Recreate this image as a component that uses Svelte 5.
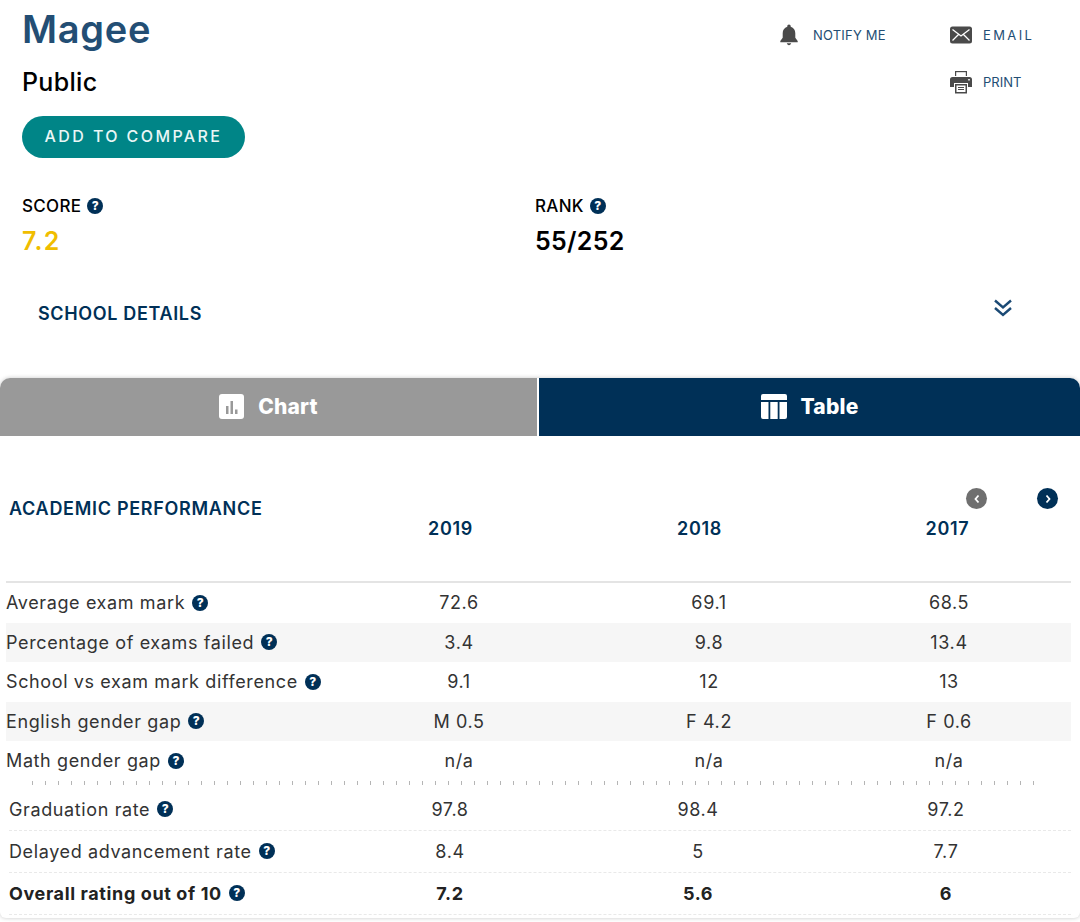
<script>
  const mainRows = [
    { label: 'Average exam mark', vals: ['72.6', '69.1', '68.5'] },
    { label: 'Percentage of exams failed', vals: ['3.4', '9.8', '13.4'] },
    { label: 'School vs exam mark difference', vals: ['9.1', '12', '13'] },
    { label: 'English gender gap', vals: ['M 0.5', 'F 4.2', 'F 0.6'] },
    { label: 'Math gender gap', vals: ['n/a', 'n/a', 'n/a'] }
  ];
  const lowerRows = [
    { label: 'Graduation rate', vals: ['97.8', '98.4', '97.2'] },
    { label: 'Delayed advancement rate', vals: ['8.4', '5', '7.7'] },
    { label: 'Overall rating out of 10', vals: ['7.2', '5.6', '6'], bold: true }
  ];
</script>

{#snippet help()}
  <span class="help">?</span>
{/snippet}

<div class="page">
  <header class="top">
    <div class="top-left">
      <h1>Magee</h1>
      <div class="kind">Public</div>
      <button class="compare">ADD TO COMPARE</button>
    </div>
    <div class="actions">
      <div class="action notify">
        <svg width="22" height="22" viewBox="0 0 22 22"><path fill="#4a4a4a" d="M11 0.5c-1 0-1.7.8-1.7 1.7v.6C6.200 3.600 4.700 6.200 4.700 9.200v4.600L2.300 17v1.200h17.400V17l-2.400-3.200V9.200c0-3-1.500-5.600-4.600-6.400v-.6c0-.9-.7-1.700-1.700-1.700zM8.800 19.300c.2 1.100 1.100 1.900 2.200 1.900s2-.8 2.200-1.900z"/></svg>
        <span>NOTIFY ME</span>
      </div>
      <div class="action">
        <svg width="22" height="18" viewBox="0 0 22 18"><rect width="22" height="17" y=".5" rx="2.500" fill="#4a4a4a"/><path d="M2.500 3.500 11 10l8.500-6.500M2.500 14.500l6-6M19.500 14.500l-6-6" fill="none" stroke="#fff" stroke-width="1.300"/></svg>
        <span class="wide">EMAIL</span>
      </div>
      <div class="action print">
        <svg width="22" height="24" viewBox="0 0 22 24"><path fill="#4a4a4a" d="M5 1h12v5H5z"/><path fill="#fff" d="M6.200 2.200h9.600V6H6.200z"/><path fill="#4a4a4a" d="M2.500 7h17A2.500 2.500 0 0 1 22 9.500V17h-4v-4H4v4H0V9.500A2.500 2.500 0 0 1 2.500 7z"/><path fill="#fff" d="M18.200 9h1.600v1.600h-1.600z"/><path fill="#4a4a4a" d="M5 14h12v9.500H5z"/><path fill="#fff" d="M6.500 15.500h9v6.500h-9z"/><path stroke="#4a4a4a" d="M8 17.500h6M8 19.500h6"/></svg>
        <span>PRINT</span>
      </div>
    </div>
  </header>

  <section class="stats">
    <div class="stat">
      <div class="stat-label">SCORE {@render help()}</div>
      <div class="stat-value gold">7.2</div>
    </div>
    <div class="stat">
      <div class="stat-label">RANK {@render help()}</div>
      <div class="stat-value">55/252</div>
    </div>
  </section>

  <div class="details">
    <span>SCHOOL DETAILS</span>
    <svg width="20" height="18" viewBox="0 0 20 18" fill="none" stroke="#1b4a75" stroke-width="2.400"><path d="M2 1.500l8 7 8-7M2 9l8 7 8-7"/></svg>
  </div>

  <section class="card">
    <div class="tabs">
      <div class="tab chart">
        <svg width="25" height="25" viewBox="0 0 25 25"><rect width="25" height="25" rx="3" fill="#fff"/><path d="M7 12h2.500v8H7zM11.500 7H14v13h-2.500zM16 15.500h2.500V20H16z" fill="#999"/></svg>
        <span>Chart</span>
      </div>
      <div class="tab table-tab">
        <svg width="26" height="25" viewBox="0 0 26 25" fill="#fff"><path d="M2 0h22a2 2 0 0 1 2 2v4H0V2a2 2 0 0 1 2-2zM0 8h7.500v17H2a2 2 0 0 1-2-2zM9.300 8h7.400v17H9.300zM18.500 8H26v15a2 2 0 0 1-2 2h-5.500z"/></svg>
        <span>Table</span>
      </div>
    </div>

    <div class="table-head">
      <h2>ACADEMIC PERFORMANCE</h2>
      <div class="pager">
        <span class="nav off"><svg width="8" height="10" viewBox="0 0 8 10" fill="none" stroke="#fff" stroke-width="1.800"><path d="M5.500 1.500 2.500 5l3 3.500"/></svg></span>
        <span class="nav"><svg width="8" height="10" viewBox="0 0 8 10" fill="none" stroke="#fff" stroke-width="1.800"><path d="M2.500 1.500 5.500 5l-3 3.500"/></svg></span>
      </div>
      <div class="years"><span>2019</span><span>2018</span><span>2017</span></div>
    </div>

    <div class="rows main-rows">
      {#each mainRows as row}
        <div class="row">
          <div class="label">{row.label} {@render help()}</div>
          {#each row.vals as v}<div class="val">{v}</div>{/each}
        </div>
      {/each}
    </div>

    <div class="ticks"></div>

    <div class="rows lower-rows">
      {#each lowerRows as row}
        <div class="row" class:bold={row.bold}>
          <div class="label">{row.label} {@render help()}</div>
          {#each row.vals as v}<div class="val">{v}</div>{/each}
        </div>
      {/each}
    </div>
  </section>
</div>

<style>
  :global(body) {
    margin: 0;
    background: #fff;
    font-family: Inter, "Open Sans", sans-serif;
  }

  .page {
    width: 1080px;
    height: 922px;
    overflow: hidden;
  }

  .top {
    display: flex;
    justify-content: space-between;
    padding: 7px 0 0 22px;
    height: 151px;
  }

  h1 {
    margin: 0;
    font-size: 38px;
    line-height: 44px;
    font-weight: 600;
    letter-spacing: 0.7px;
    color: #234e74;
  }

  .kind {
    margin-top: 16px;
    font-size: 25px;
    font-weight: 500;
    letter-spacing: 0.3px;
    color: #000;
    line-height: 30px;
  }

  .compare {
    display: block;
    margin-top: 19px;
    padding: 0 0 2px;
    width: 223px;
    height: 42px;
    border: 0;
    border-radius: 21px;
    background: #008587;
    color: #eaf6f6;
    font: 500 16px Inter, sans-serif;
    letter-spacing: 2.400px;
  }

  .actions {
    display: grid;
    grid-template-columns: 172px 130px;
    grid-auto-rows: 47px;
    padding-top: 6px;
  }

  .action {
    display: flex;
    align-items: center;
    gap: 11px;
    height: 44px;
    font-size: 13px;
    color: #234e74;
  }

  .action svg {
    flex: none;
  }

  .notify {
    gap: 13px;
    letter-spacing: 0.2px;
  }

  .wide {
    letter-spacing: 2.400px;
  }

  .print {
    grid-column: 2;
  }

  .stats {
    display: grid;
    grid-template-columns: 513px 1fr;
    padding-left: 22px;
    margin-top: 37px;
  }

  .stat-label {
    display: flex;
    align-items: center;
    gap: 6px;
    height: 22px;
    font-size: 17px;
    font-weight: 500;
    letter-spacing: 0.3px;
    color: #000;
  }

  .stat-value {
    margin-top: 9px;
    font-size: 25px;
    line-height: 30px;
    font-weight: 600;
    letter-spacing: 0.3px;
    color: #000;
  }

  .gold {
    color: #f0bd00;
    letter-spacing: 1.200px;
  }

  .help {
    display: inline-flex;
    flex: none;
    align-items: center;
    justify-content: center;
    width: 16px;
    height: 16px;
    border-radius: 50%;
    background: #003057;
    color: #fff;
    font-size: 12px;
    font-weight: 800;
    line-height: 1;
    letter-spacing: 0;
  }

  .details {
    display: flex;
    justify-content: space-between;
    align-items: center;
    height: 40px;
    margin-top: 33px;
    padding: 0 67px 0 38px;
    font-size: 18px;
    font-weight: 600;
    letter-spacing: 0.65px;
    color: #003057;
  }

  .details span {
    margin-top: 8px;
  }

  .details svg {
    margin-top: -2px;
  }

  .card {
    margin-top: 49px;
    height: 540px;
    border-radius: 10px 10px 6px 6px;
    box-shadow: 0 0 4px rgba(0, 0, 0, 0.22);
    overflow: hidden;
  }

  .tabs {
    display: grid;
    grid-template-columns: 537px 1fr;
    gap: 2px;
    height: 58px;
  }

  .tab {
    display: flex;
    align-items: center;
    justify-content: center;
    gap: 14px;
    padding-bottom: 2px;
    color: #fff;
    font-size: 21px;
    font-weight: 800;
    letter-spacing: 0.2px;
  }

  .chart {
    background: #999;
  }

  .table-tab {
    background: #003057;
  }

  .table-head {
    position: relative;
    height: 145px;
  }

  h2 {
    margin: 0;
    padding: 61px 0 0 9px;
    font-size: 18px;
    line-height: 24px;
    font-weight: 600;
    letter-spacing: 0.7px;
    color: #003057;
  }

  .pager {
    position: absolute;
    top: 52px;
    right: 22px;
    display: flex;
    gap: 50px;
  }

  .nav {
    display: flex;
    align-items: center;
    justify-content: center;
    width: 21px;
    height: 21px;
    border-radius: 50%;
    background: #003057;
  }

  .off {
    background: #6f6f6f;
  }

  .years {
    position: absolute;
    top: 81px;
    left: 326px;
    display: grid;
    grid-template-columns: 249px 248px 248px;
    font-size: 18px;
    line-height: 24px;
    font-weight: 600;
    letter-spacing: 0.7px;
    color: #003057;
  }

  .years span {
    text-align: center;
    width: 249px;
  }

  .main-rows {
    margin: 0 9px 0 6px;
    border-top: 2px solid #e4e4e4;
  }

  .row {
    display: grid;
    align-items: center;
    height: 39.500px;
    font-size: 18px;
    letter-spacing: 0.62px;
    color: #333;
  }

  .main-rows .row {
    grid-template-columns: 329px 250px 240px 1fr;
  }

  .main-rows .row:nth-child(even) {
    background: #f6f6f6;
  }

  .label {
    display: flex;
    align-items: center;
    gap: 7px;
    white-space: nowrap;
  }

  .val {
    text-align: center;
    width: 248px;
  }

  .ticks {
    height: 4px;
    margin: 0 45px 0 32px;
    background: repeating-linear-gradient(90deg, #b5b5b5 0 1px, transparent 1px 13px);
  }

  .lower-rows {
    margin: 4px 9px 0 9px;
  }

  .lower-rows .row {
    grid-template-columns: 317px 248px 248px 1fr;
    height: 42px;
    border-bottom: 1px dashed #e9e9e9;
    box-sizing: border-box;
  }

  .bold {
    font-weight: 700;
    color: #222;
  }
</style>
